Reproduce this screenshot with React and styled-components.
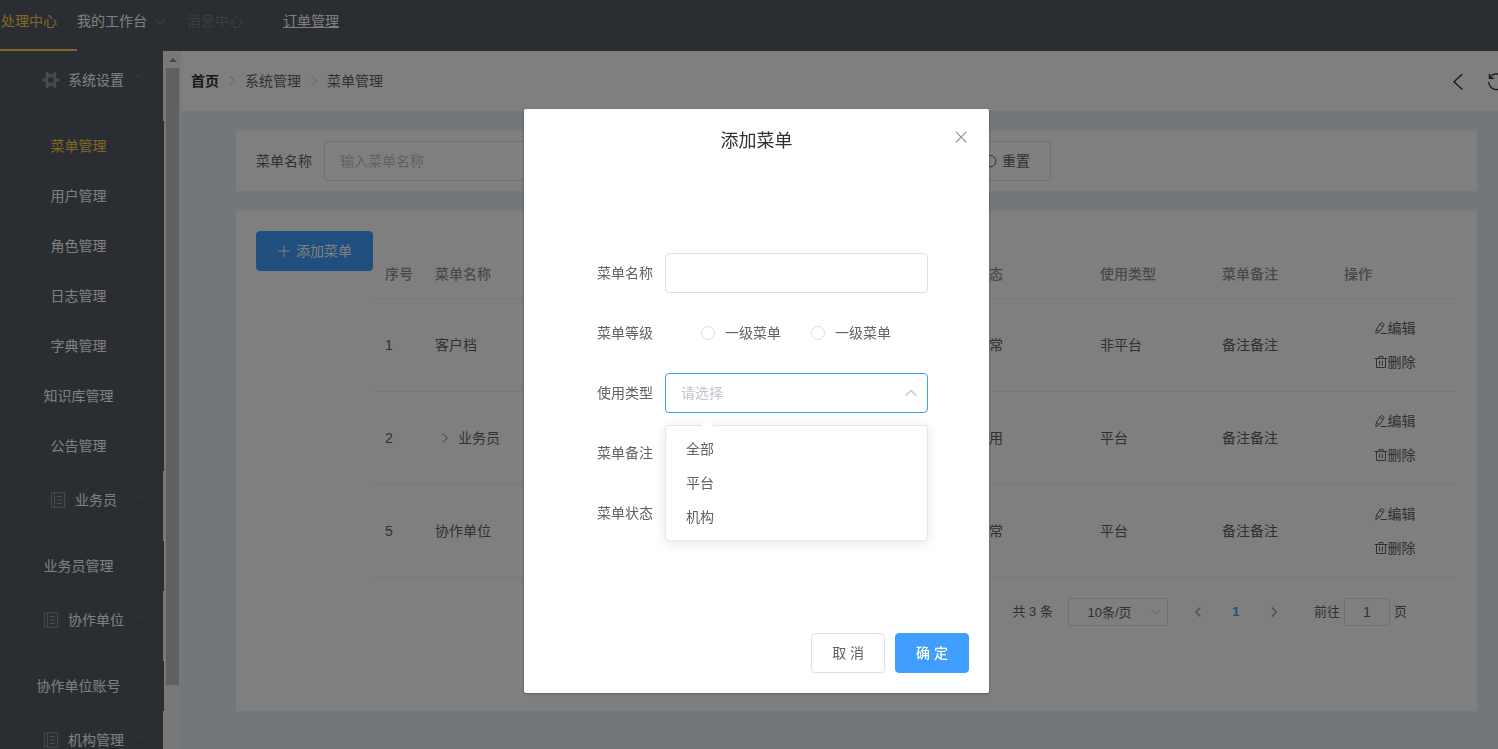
import React from 'react';
import styled, { createGlobalStyle, css } from 'styled-components';

const GlobalStyle = createGlobalStyle`
    * {
        box-sizing: border-box;
    }

    body {
        margin: 0;
        overflow: hidden;
        color: #606266;
        font-family: 'Liberation Sans', 'Noto Sans CJK SC', sans-serif;
        font-size: 14px;
        line-height: 20px;
    }

    button, input, select {
        margin: 0;
        font: inherit;
        color: inherit;
    }

    a {
        color: inherit;
        text-decoration: none;
    }

    ul {
        margin: 0;
        padding: 0;
        list-style: none;
    }
`;

/* ---------- icons ---------- */

const Svg = styled.svg`
    flex: none;
    display: block;
    width: ${props => props.$size || 14}px;
    height: ${props => props.$size || 14}px;
    fill: none;
    stroke: currentColor;
    stroke-width: 1;
    stroke-linecap: round;
    stroke-linejoin: round;
`;

const paths = {
    up: 'M2.2 9.2 7 4.6 11.8 9.2',
    down: 'M2.2 4.8 7 9.4 11.8 4.8',
    left: 'M9 2.5 4.5 7 9 11.5',
    right: 'M5 2.2 9.6 7 5 11.8',
    back: 'M10.2 1.8 4.4 7.2l5.8 5.4',
    close: 'M2.8 2.8l8.6 8.6M11.4 2.8l-8.6 8.6',
    plus: 'M7 1.5v11M1.5 7h11',
    edit: 'M1.8 12.2 2.4 8.4 6.6 2q.6-.8 1.4-.3l1.6 1q.8.6.3 1.4L5.7 10.4zM5.8 3.4 8.9 5.4M2.4 8.4 5.4 10.3M7 12.5h5.5',
    trash: 'M1 3.5h12M5 3.5v-2h4v2M2.5 3.5v9h9v-9M5.6 6v4M8.4 6v4',
    refresh: 'M1.8 1.8v2.8h2.8M2 4.4A5.8 5.8 0 1 1 1.3 7.6',
    notebook: 'M1.2.7h11.6v12.6H1.2zM4 .7v12.6M6.3 4h3.9M6.3 7h3.9M6.3 10h3.9',
};

const Icon = ({ name, size }) => (
    <Svg viewBox="0 0 14 14" $size={size} aria-hidden="true">
        <path d={paths[name]} />
    </Svg>
);

const GearIcon = () => (
    <Svg viewBox="0 0 18 18" $size={18} aria-hidden="true">
        <circle cx="9" cy="9" r="4.6" strokeWidth="3" />
        <path
            d="M5 2.6 6.2 4.6M13 2.6 11.8 4.6M2 9H3.4M16 9H14.6M5 15.4 6.2 13.4M13 15.4 11.8 13.4"
            strokeWidth="3.4"
        />
    </Svg>
);

/* ---------- shared controls ---------- */

const Button = styled.button`
    display: inline-flex;
    flex: none;
    align-items: center;
    justify-content: center;
    gap: 5px;
    height: 40px;
    padding: 0 20px;
    border: 1px solid #dcdfe6;
    border-radius: 4px;
    background: #fff;
    white-space: nowrap;
    cursor: pointer;

    ${props => props.$primary && css`
        border-color: #409eff;
        background: #409eff;
        color: #fff;
        font-weight: ${props.$strong ? 500 : 400};
    `}
`;

const field = css`
    width: 100%;
    height: 40px;
    padding: 0 15px;
    border: 1px solid #dcdfe6;
    border-radius: 4px;
    background: #fff;
    outline: none;
`;

const TextInput = styled.input`
    ${field}

    &::placeholder {
        color: #c0c4cc;
        opacity: 1;
    }
`;

/* ---------- header ---------- */

const Page = styled.div`
    display: flex;
    flex-direction: column;
    height: 100vh;
    overflow: hidden;
`;

const Header = styled.header`
    flex: none;
    height: 51px;
    background: #545c64;
`;

const Nav = styled.nav`
    display: flex;
    height: 100%;
    color: #fff;
`;

const NavLink = styled.a`
    display: flex;
    align-items: center;
    gap: 7px;
    padding: 0 20px 7px 0;
    border-bottom: 2px solid transparent;
    white-space: nowrap;

    ${props => props.$active && css`
        padding-left: 1px;
        border-color: #ffd04b;
        color: #ffd04b;
    `}

    ${props => props.$disabled && css`
        padding-right: 40px;
        color: #909399;
        opacity: 0.6;
    `}

    ${props => props.$underline && css`
        text-decoration: underline;
    `}

    svg {
        color: #909399;
    }
`;

/* ---------- sidebar ---------- */

const Body = styled.div`
    display: flex;
    flex: 1;
    min-height: 0;
`;

const Aside = styled.aside`
    display: flex;
    flex: none;
    width: 181px;
    overflow: hidden;
    background: #f5f5f5;
`;

const Menu = styled.div`
    width: 164px;
    text-align: center;
    color: #fff;
`;

const MenuTitle = styled.div`
    display: flex;
    position: relative;
    align-items: flex-start;
    justify-content: center;
    gap: 5px;
    width: 163px;
    height: 70px;
    padding-top: 19px;
    background: #545c64;
`;

const MenuIcon = styled.span`
    display: flex;
    align-items: center;
    justify-content: center;
    width: 24px;
    height: 20px;
    color: #909399;
`;

const MenuArrow = styled.span`
    position: absolute;
    top: 20px;
    right: 19px;
    color: #909399;
    opacity: 0.7;
`;

const MenuItem = styled.a`
    display: block;
    height: 50px;
    padding-right: 7px;
    background: #545c64;
    color: ${props => (props.$active ? '#ffd04b' : '#fff')};
    line-height: 50px;
`;

const ScrollTrack = styled.div`
    display: flex;
    flex: 1;
    flex-direction: column;
    align-items: center;
    background: #f1f1f1;
    color: #909090;
`;

const ScrollArrow = styled.div`
    display: flex;
    align-items: center;
    height: 17px;
`;

const ScrollThumb = styled.div`
    width: 13px;
    height: 617px;
    background: #c1c1c1;
`;

/* ---------- content ---------- */

const Content = styled.div`
    flex: 1;
    min-width: 0;
    background: #e9eef3;
`;

const CrumbBar = styled.div`
    display: flex;
    align-items: center;
    justify-content: space-between;
    height: 60px;
    padding-left: 10px;
    overflow: hidden;
    background: #fff;
`;

const Crumbs = styled.nav`
    display: flex;
    align-items: center;
    gap: 6px;

    svg {
        color: #c0c4cc;
    }
`;

const HomeCrumb = styled.a`
    color: #303133;
    font-weight: 700;
`;

// the last tool runs past the right edge of the bar
const Tools = styled.div`
    display: flex;
    gap: 20px;
    margin-right: -8px;
`;

const ToolButton = styled.button`
    padding: 0;
    border: 0;
    background: none;
    color: #303133;
    cursor: pointer;
`;

const Main = styled.main`
    display: flex;
    flex-direction: column;
    gap: 20px;
    padding: 20px 21px 20px 55px;
`;

const SearchCard = styled.form`
    display: flex;
    align-items: center;
    height: 60px;
    padding: 0 20px;
    background: #fff;

    label {
        flex: none;
        margin-right: 12px;
    }
`;

const SearchField = styled.div`
    flex: 0 1 628px;
    margin-right: 10px;
`;

const TableCard = styled.section`
    display: flex;
    align-items: flex-start;
    gap: 2px;
    min-height: 500px;
    padding: 20px 22px 20px 20px;
    background: #fff;
`;

const TableArea = styled.div`
    flex: 1;
    min-width: 0;
    padding-top: 20px;
`;

const Table = styled.table`
    width: 100%;
    border-collapse: separate;
    border-spacing: 0;
    table-layout: fixed;
    line-height: 23px;

    th, td {
        padding: 12px 10px;
        border-bottom: 1px solid #ebeef5;
        text-align: left;
        white-space: nowrap;
    }

    th {
        color: #909399;
        font-weight: 500;
    }
`;

const Col = styled.col`
    width: ${props => props.$width}px;
`;

const NameCell = styled.div`
    display: flex;
    align-items: center;
    gap: 3px;
`;

const ExpandIcon = styled.span`
    display: flex;
    justify-content: center;
    width: 20px;
`;

const RowLink = styled.a`
    display: flex;
    align-items: center;
    justify-content: center;
    height: 34px;
`;

const Pagination = styled.div`
    display: flex;
    align-items: center;
    justify-content: flex-end;
    padding: 20px 48px 0 0;
    font-size: 13px;
    line-height: 28px;
`;

const SizeSelect = styled.div`
    position: relative;
    width: 100px;
    margin: 0 11px 0 15px;

    select {
        display: block;
        width: 100%;
        height: 28px;
        padding: 0 25px 0 8px;
        border: 1px solid #dcdfe6;
        border-radius: 3px;
        background: #fff;
        appearance: none;
        text-align: center;
        text-align-last: center;
    }

    svg {
        position: absolute;
        top: 8px;
        right: 6px;
        color: #c0c4cc;
    }
`;

const PageButton = styled.button`
    display: flex;
    align-items: center;
    justify-content: center;
    width: 38px;
    height: 28px;
    padding: 0;
    border: 0;
    background: none;
    color: ${props => (props.$active ? '#409eff' : '#a8abb2')};
    font-weight: 700;

    svg {
        stroke-width: 2;
    }
`;

const Jumper = styled.label`
    display: flex;
    align-items: center;
    gap: 4px;
    margin-left: 21px;

    input {
        width: 46px;
        height: 28px;
        padding: 0 3px;
        border: 1px solid #dcdfe6;
        border-radius: 3px;
        background: #fff;
        font-size: 14px;
        text-align: center;
    }
`;

/* ---------- dialog ---------- */

const Overlay = styled.div`
    display: flex;
    position: fixed;
    inset: 0;
    align-items: flex-start;
    justify-content: center;
    padding: 109px 0 0 15px;
    background: rgba(0, 0, 0, 0.5);
`;

const Dialog = styled.div`
    position: relative;
    width: 465px;
    border-radius: 2px;
    background: #fff;
    box-shadow: 0 1px 3px rgba(0, 0, 0, 0.3);
`;

const DialogTitle = styled.h2`
    margin: 0;
    padding: 20px 20px 10px;
    color: #303133;
    font-size: 18px;
    font-weight: 400;
    line-height: 24px;
    text-align: center;
`;

const CloseButton = styled.button`
    position: absolute;
    top: 20px;
    right: 20px;
    padding: 0;
    border: 0;
    background: none;
    color: #909399;
    cursor: pointer;
`;

const DialogForm = styled.form`
    display: flex;
    flex-direction: column;
    gap: 20px;
    padding: 90px 61px 90px 73px;
`;

const FormRow = styled.div`
    display: flex;
    align-items: center;
    gap: 12px;
    height: 40px;
`;

const FormLabel = styled.label`
    flex: none;
`;

const FormControl = styled.div`
    position: relative;
    flex: 1;
    min-width: 0;
`;

const TypeSelect = styled.select`
    ${field}
    display: block;
    border-color: #409eff;
    appearance: none;
    color: #c0c4cc;
`;

const SelectArrow = styled.span`
    position: absolute;
    top: 13px;
    right: 10px;
    color: #c0c4cc;
    pointer-events: none;

    svg {
        stroke-width: 1.4;
    }
`;

const Dropdown = styled.ul`
    position: absolute;
    z-index: 1;
    top: 52px;
    left: 0;
    right: 0;
    padding: 6px 0;
    border: 1px solid #e4e7ed;
    border-radius: 4px;
    background: #fff;
    box-shadow: 0 2px 12px rgba(0, 0, 0, 0.1);

    &::before {
        position: absolute;
        top: -5px;
        left: 37px;
        width: 8px;
        height: 8px;
        background: #fff;
        content: '';
        transform: rotate(45deg);
    }
`;

const Option = styled.li`
    height: 34px;
    padding: 0 20px;
    line-height: 34px;
`;

const RadioGroup = styled.div`
    display: flex;
    gap: 30px;
    padding-left: 36px;
`;

const RadioLabel = styled.label`
    display: flex;
    align-items: center;
    gap: 10px;
    white-space: nowrap;
`;

const Radio = styled.input`
    width: 14px;
    height: 14px;
    border: 1px solid #dcdfe6;
    border-radius: 50%;
    background: #fff;
    appearance: none;
`;

const DialogFooter = styled.div`
    display: flex;
    justify-content: flex-end;
    gap: 10px;
    padding: 10px 20px 20px;
`;

/* ---------- data ---------- */

const menus = [
    {
        title: '系统设置',
        gear: true,
        items: ['菜单管理', '用户管理', '角色管理', '日志管理', '字典管理', '知识库管理', '公告管理'],
    },
    { title: '业务员', items: ['业务员管理'] },
    { title: '协作单位', items: ['协作单位账号'] },
    { title: '机构管理', items: [] },
];

const rows = [
    { id: 1, name: '客户档', status: '正常', type: '非平台', remark: '备注备注' },
    { id: 2, name: '业务员', status: '停用', type: '平台', remark: '备注备注', nested: true },
    { id: 5, name: '协作单位', status: '正常', type: '平台', remark: '备注备注' },
];

const Sidebar = () => (
    <Aside>
        <Menu>
            {menus.map(menu => (
                <React.Fragment key={menu.title}>
                    <MenuTitle>
                        <MenuIcon>
                            {menu.gear ? <GearIcon /> : <Icon name="notebook" size={16} />}
                        </MenuIcon>
                        {menu.title}
                        <MenuArrow><Icon name="up" size={12} /></MenuArrow>
                    </MenuTitle>
                    {menu.items.map(item => (
                        <MenuItem key={item} href="#" $active={item === '菜单管理'}>{item}</MenuItem>
                    ))}
                </React.Fragment>
            ))}
        </Menu>
        <ScrollTrack>
            <ScrollArrow>
                <svg width="8" height="4" viewBox="0 0 8 4"><path d="M0 4 4 0l4 4z" fill="currentColor" /></svg>
            </ScrollArrow>
            <ScrollThumb />
        </ScrollTrack>
    </Aside>
);

const MenuTable = () => (
    <Table>
        <colgroup>
            <Col $width={50} />
            <col />
            <Col $width={125} />
            <Col $width={122} />
            <Col $width={122} />
            <Col $width={121} />
        </colgroup>
        <thead>
            <tr>
                <th>序号</th>
                <th>菜单名称</th>
                <th>状态</th>
                <th>使用类型</th>
                <th>菜单备注</th>
                <th>操作</th>
            </tr>
        </thead>
        <tbody>
            {rows.map(row => (
                <tr key={row.id}>
                    <td>{row.id}</td>
                    <td>
                        <NameCell>
                            {row.nested && <ExpandIcon><Icon name="right" size={12} /></ExpandIcon>}
                            {row.name}
                        </NameCell>
                    </td>
                    <td>{row.status}</td>
                    <td>{row.type}</td>
                    <td>{row.remark}</td>
                    <td>
                        <RowLink href="#"><Icon name="edit" />编辑</RowLink>
                        <RowLink href="#"><Icon name="trash" />删除</RowLink>
                    </td>
                </tr>
            ))}
        </tbody>
    </Table>
);

const AddMenuDialog = () => (
    <Overlay>
        <Dialog role="dialog" aria-labelledby="dialog-title">
            <DialogTitle id="dialog-title">添加菜单</DialogTitle>
            <CloseButton type="button"><Icon name="close" size={16} /></CloseButton>
            <DialogForm>
                <FormRow>
                    <FormLabel htmlFor="menu-name">菜单名称</FormLabel>
                    <FormControl><TextInput id="menu-name" /></FormControl>
                </FormRow>
                <FormRow>
                    <FormLabel as="span">菜单等级</FormLabel>
                    <RadioGroup>
                        <RadioLabel><Radio type="radio" name="level" />一级菜单</RadioLabel>
                        <RadioLabel><Radio type="radio" name="level" />一级菜单</RadioLabel>
                    </RadioGroup>
                </FormRow>
                <FormRow>
                    <FormLabel htmlFor="menu-type">使用类型</FormLabel>
                    <FormControl>
                        <TypeSelect id="menu-type">
                            <option>请选择</option>
                        </TypeSelect>
                        <SelectArrow><Icon name="up" /></SelectArrow>
                        <Dropdown>
                            <Option>全部</Option>
                            <Option>平台</Option>
                            <Option>机构</Option>
                        </Dropdown>
                    </FormControl>
                </FormRow>
                <FormRow>
                    <FormLabel htmlFor="menu-remark">菜单备注</FormLabel>
                    <FormControl><TextInput id="menu-remark" /></FormControl>
                </FormRow>
                <FormRow>
                    <FormLabel htmlFor="menu-status">菜单状态</FormLabel>
                    <FormControl><TextInput id="menu-status" /></FormControl>
                </FormRow>
            </DialogForm>
            <DialogFooter>
                <Button type="button">取 消</Button>
                <Button type="button" $primary $strong>确 定</Button>
            </DialogFooter>
        </Dialog>
    </Overlay>
);

const App = () => (
    <>
        <GlobalStyle />
        <Page>
            <Header>
                <Nav>
                    <NavLink href="#" $active>处理中心</NavLink>
                    <NavLink href="#">我的工作台<Icon name="down" size={13} /></NavLink>
                    <NavLink href="#" $disabled>消息中心</NavLink>
                    <NavLink href="#" $underline>订单管理</NavLink>
                </Nav>
            </Header>
            <Body>
                <Sidebar />
                <Content>
                    <CrumbBar>
                        <Crumbs>
                            <HomeCrumb href="#">首页</HomeCrumb>
                            <Icon name="right" />
                            <span>系统管理</span>
                            <Icon name="right" />
                            <span>菜单管理</span>
                        </Crumbs>
                        <Tools>
                            <ToolButton type="button"><Icon name="back" size={19} /></ToolButton>
                            <ToolButton type="button"><Icon name="refresh" size={19} /></ToolButton>
                        </Tools>
                    </CrumbBar>
                    <Main>
                        <SearchCard>
                            <label htmlFor="search-name">菜单名称</label>
                            <SearchField>
                                <TextInput id="search-name" placeholder="输入菜单名称" />
                            </SearchField>
                            <Button type="button"><Icon name="refresh" />重置</Button>
                        </SearchCard>
                        <TableCard>
                            <Button type="button" $primary><Icon name="plus" />添加菜单</Button>
                            <TableArea>
                                <MenuTable />
                                <Pagination>
                                    <span>共 3 条</span>
                                    <SizeSelect>
                                        <select aria-label="10条/页">
                                            <option>10条/页</option>
                                        </select>
                                        <Icon name="down" size={12} />
                                    </SizeSelect>
                                    <PageButton type="button"><Icon name="left" size={12} /></PageButton>
                                    <PageButton type="button" $active>1</PageButton>
                                    <PageButton type="button"><Icon name="right" size={12} /></PageButton>
                                    <Jumper>
                                        前往
                                        <input defaultValue="1" />
                                        页
                                    </Jumper>
                                </Pagination>
                            </TableArea>
                        </TableCard>
                    </Main>
                </Content>
            </Body>
        </Page>
        <AddMenuDialog />
    </>
);

export default App;
